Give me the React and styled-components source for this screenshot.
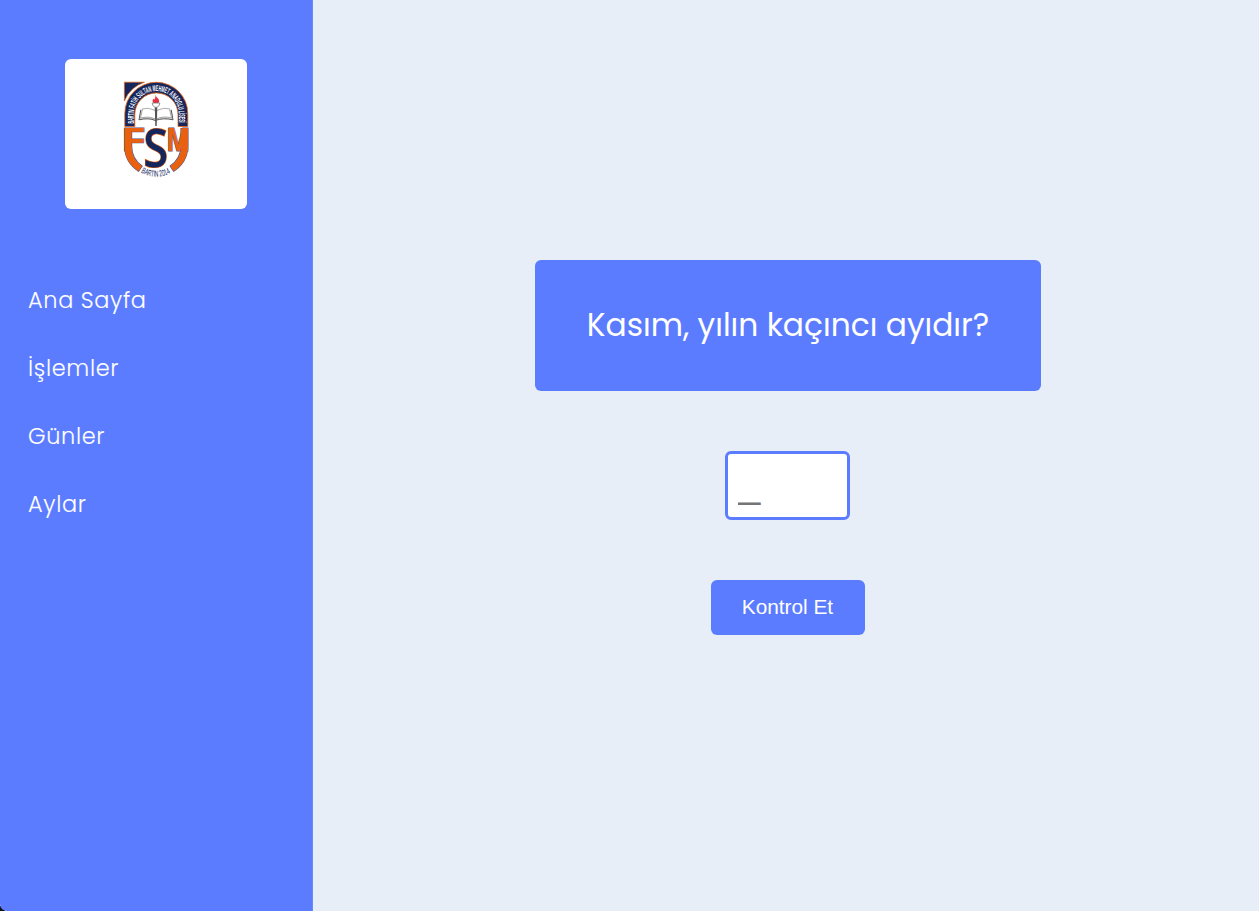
import React from 'react';
import styled, { createGlobalStyle } from 'styled-components';

const GlobalStyle = createGlobalStyle`
  * { box-sizing: border-box; }
  body { margin: 0; background: #e7eef8; font-family: Poppins, Inter, sans-serif; }
`;

const Page = styled.div`
  display: flex;
  height: 100vh;
  min-height: 600px;
  overflow: hidden;
  background: linear-gradient(45deg, #111 0 4px, #e7eef8 4px);
`;

const Sidebar = styled.aside`
  width: 313px;
  flex: none;
  padding-top: 59px;
  background: #5c7cff;
  border-right: 1px solid #6a88ff;
  border-bottom-left-radius: 7px;
`;

const LogoCard = styled.div`
  width: 182px;
  height: 150px;
  margin: 0 auto 57px 65px;
  padding: 17px 0 0 51px;
  background: #fff;
  border-radius: 6px;
`;

const Nav = styled.nav`
  display: flex;
  flex-direction: column;
`;

const NavLink = styled.a`
  height: 68px;
  padding-left: 28px;
  line-height: 68px;
  color: #fff;
  font-size: 22.4px;
  font-weight: 300;
  letter-spacing: 0.68px;
  -webkit-text-stroke: 0.1px #fff;
  white-space: nowrap;
`;

const Main = styled.main`
  flex: 1;
  display: flex;
  flex-direction: column;
  align-items: center;
  padding: 260px 0 0 4px;
`;

const Question = styled.h1`
  display: flex;
  align-items: center;
  justify-content: center;
  width: 506px;
  height: 131px;
  margin: 0 0 60px;
  border-radius: 6px;
  background: #5c7cff;
  color: #fff;
  font-size: 31.3px;
  font-weight: 400;
  white-space: nowrap;
`;

const Answer = styled.input`
  width: 125px;
  height: 69px;
  margin: 0 1px 60px 0;
  padding: 0 10px 4px;
  border: 3px solid #5c7cff;
  border-radius: 6px;
  background: #fff;
  font: 40px "Liberation Sans", sans-serif;
  &::placeholder { color: #757575; }
`;

const CheckButton = styled.button`
  width: 154px;
  height: 55px;
  padding: 0 1px 2px 0;
  border: 0;
  border-radius: 6px;
  background: #5c7cff;
  color: #fff;
  font: 20.8px "Liberation Sans", sans-serif;
`;

const CrestLetter = styled.text`
  font-family: "Liberation Sans", sans-serif;
  font-size: 33px;
  font-weight: 700;
  fill: #e9600f;
  stroke: #56558a;
  stroke-width: 1.2px;
  paint-order: stroke;
`;

const CrestInitial = styled.text`
  font-family: "Open Sans", sans-serif;
  font-size: 52.6px;
  font-weight: 600;
  fill: #14265c;
  stroke: #e9600f;
  stroke-width: 1.2px;
  paint-order: stroke;
`;

const CrestCaption = styled.text`
  font-family: "Liberation Sans Narrow", "Liberation Sans", sans-serif;
  font-size: ${(p) => p.$size}px;
  font-weight: ${(p) => p.$weight};
  fill: ${(p) => p.$color};
`;

const links = ['Ana Sayfa', 'İşlemler', 'Günler', 'Aylar'];

const shieldSides =
  'M124.7 128.6H131.6V146C131.6 156 135.5 161.5 142 166.1L138.6 171.2C129.3 165 124.7 157.5 124.7 146Z' +
  'M181 128.6H187.7V146C187.7 157.5 183 165 173.7 171.2L170.3 166.1C177.2 161.2 181 155.5 181 146Z';

function Crest() {
  const navy = '#14265c';
  const orange = '#e9600f';
  return (
    <svg width="80" height="106" viewBox="116 76 80 106" fill="none">
      <defs>
        <path id="arch" d="M133.9 123.5V113.5A22.4 22.4 0 0 1 178.7 113.5V123.5" />
        <path id="base" d="M140.8 172.5Q156 181 171.2 172.5" />
      </defs>
      <path d="M124.4 82.2H144.5Q130 87 124.4 101Z" fill={navy} stroke={orange} strokeWidth=".7" />
      <path d="M124.8 126.5V113.5A31.5 31.2 0 0 1 187.8 113.5V126.5H178V114.5A21.6 21.6 0 0 0 134.8 114.5V126.5Z" fill={navy} stroke={orange} strokeWidth=".8" />
      <CrestCaption $size={8.4} $weight={700} $color="#fff">
        <textPath href="#arch" textLength="89" lengthAdjust="spacingAndGlyphs">BARTIN FATİH SULTAN MEHMET ANADOLU LİSESİ</textPath>
      </CrestCaption>
      <path d="M155.8 95Q156 97 158 98.5Q160.2 101 158.3 103H153.4Q151.7 100.5 153.5 98.5L154 100Q155.5 98 155.8 95Z" fill="#e72f40" />
      <path d="M152.2 103H159.8Q159.8 106 157 107.3H155Q152.2 106 152.2 103Z" fill="#fff" stroke="#777" strokeWidth=".8" />
      <path d="M140.8 109.8L139 119.8Q149 117.5 155.3 120.5Q163 117.5 173 119.8L171.2 109.8" fill="#ddd" stroke="#555" strokeWidth="1" />
      <path d="M155.5 110.5Q148 107 142.5 108.8L140.5 117.8Q149 115.8 155.5 118.8ZM156.7 110.5Q164 107 169.5 108.8L171.5 117.8Q163 115.8 156.7 118.8Z" fill="#fff" stroke="#888" strokeWidth=".7" />
      <path d="M154.8 107.5H157.2L156.7 126H155.3Z" fill="#555" />
      <path d={shieldSides} stroke="#56558a" strokeWidth="1.2" />
      <CrestLetter x="122.3" y="151.3" textLength="22.8" lengthAdjust="spacingAndGlyphs">F</CrestLetter>
      <CrestLetter x="166.7" y="151.3" textLength="22.9" lengthAdjust="spacingAndGlyphs">M</CrestLetter>
      <path d={shieldSides} fill={orange} />
      <CrestInitial x="143.3" y="167.2" textLength="25" lengthAdjust="spacingAndGlyphs">S</CrestInitial>
      <CrestCaption $size={8.6} $weight={400} $color={navy}>
        <textPath href="#base" textLength="31" lengthAdjust="spacingAndGlyphs">BARTIN 2014</textPath>
      </CrestCaption>
    </svg>
  );
}

export default function App() {
  return (
    <>
      <GlobalStyle />
      <Page>
        <Sidebar>
          <LogoCard><Crest /></LogoCard>
          <Nav>
            {links.map((label) => <NavLink key={label}>{label}</NavLink>)}
          </Nav>
        </Sidebar>
        <Main>
          <Question>Kasım, yılın kaçıncı ayıdır?</Question>
          <Answer placeholder="_" aria-label="Cevap" />
          <CheckButton>Kontrol Et</CheckButton>
        </Main>
      </Page>
    </>
  );
}
